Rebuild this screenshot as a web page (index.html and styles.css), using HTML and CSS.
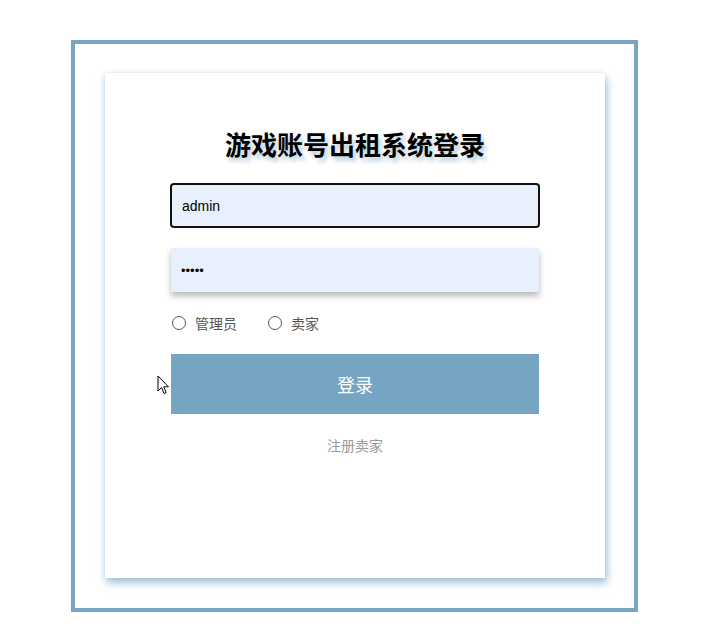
FILE: index.html
```html
<!DOCTYPE html>
<html lang="zh">
<head>
<meta charset="utf-8">
<title>游戏账号出租系统登录</title>
<link rel="stylesheet" href="styles.css">
</head>
<body>
<div class="frame">
  <div class="card">
    <h1 class="title">游戏账号出租系统登录</h1>
    <form class="form">
      <input class="field field-focus" type="text" value="admin">
      <input class="field field-shadow" type="password" value="12345">
      <div class="roles">
        <label class="role"><span class="radio"></span>管理员</label>
        <label class="role"><span class="radio"></span>卖家</label>
      </div>
      <button class="submit" type="button">登录</button>
      <a class="register">注册卖家</a>
    </form>
  </div>
</div>
<svg class="cursor" width="13" height="21" viewBox="0 0 13 21">
  <path d="M1 1 L1 16 L4.5 12.5 L7 18.5 L9.2 17.6 L6.8 11.8 L11.5 11.8 Z" fill="#fff" stroke="#000" stroke-width="1" stroke-linejoin="round"/>
</svg>
</body>
</html>
```

FILE: styles.css
```css
html, body {
  margin: 0;
  padding: 0;
  background: #ffffff;
}
body {
  padding: 40px 0 0 71px;
  font-family: "Noto Sans CJK SC", "Liberation Sans", sans-serif;
  position: relative;
  min-height: 597px;
}
.frame {
  width: 500px;
  padding: 29px 29px 30px 30px;
  border: 4px solid #77a5c2;
  background: #fff;
}
.card {
  height: 505px;
  background: #fff;
  box-shadow: 2px 5px 8px rgba(110, 160, 195, 0.65), -1px 0 4px rgba(160, 195, 215, 0.35);
  display: flex;
  flex-direction: column;
  align-items: center;
}
.title {
  margin: 51px 0 0 0;
  font-size: 26px;
  line-height: 40px;
  font-weight: 700;
  color: #000;
  text-shadow: 3px 4px 4px rgba(140, 175, 205, 0.6);
}
.form {
  margin-top: 19px;
  width: 368px;
  display: flex;
  flex-direction: column;
  align-items: center;
}
.field {
  box-sizing: border-box;
  width: 368px;
  height: 45px;
  border: none;
  background: #e8f0fe;
  font-family: "Liberation Sans", Arial, sans-serif;
  font-size: 14px;
  color: #000;
  padding: 0 10px;
  outline: none;
}
.field-focus {
  width: 370px;
  border: 2px solid #111;
  border-radius: 4px;
}
.field-shadow {
  margin-top: 20px;
  height: 44px;
  box-shadow: 0 4px 6px rgba(0, 0, 0, 0.28);
  font-size: 13px;
}
.roles {
  align-self: stretch;
  display: flex;
  gap: 30px;
  margin-top: 21px;
  height: 20px;
  align-items: center;
}
.role {
  display: flex;
  align-items: center;
  gap: 4px;
  font-size: 14px;
  color: #555;
  padding-left: 1px;
}
.radio {
  width: 12px;
  height: 12px;
  border: 1px solid #555;
  border-radius: 50%;
  margin-right: 5px;
}
.submit {
  margin-top: 21px;
  width: 368px;
  height: 60px;
  border: none;
  background: #76a5c3;
  color: #fff;
  font-family: "Noto Sans CJK SC", sans-serif;
  font-size: 18px;
}
.register {
  margin-top: 21px;
  font-size: 14px;
  color: #999;
}
.cursor {
  position: absolute;
  left: 157px;
  top: 375px;
}
```
